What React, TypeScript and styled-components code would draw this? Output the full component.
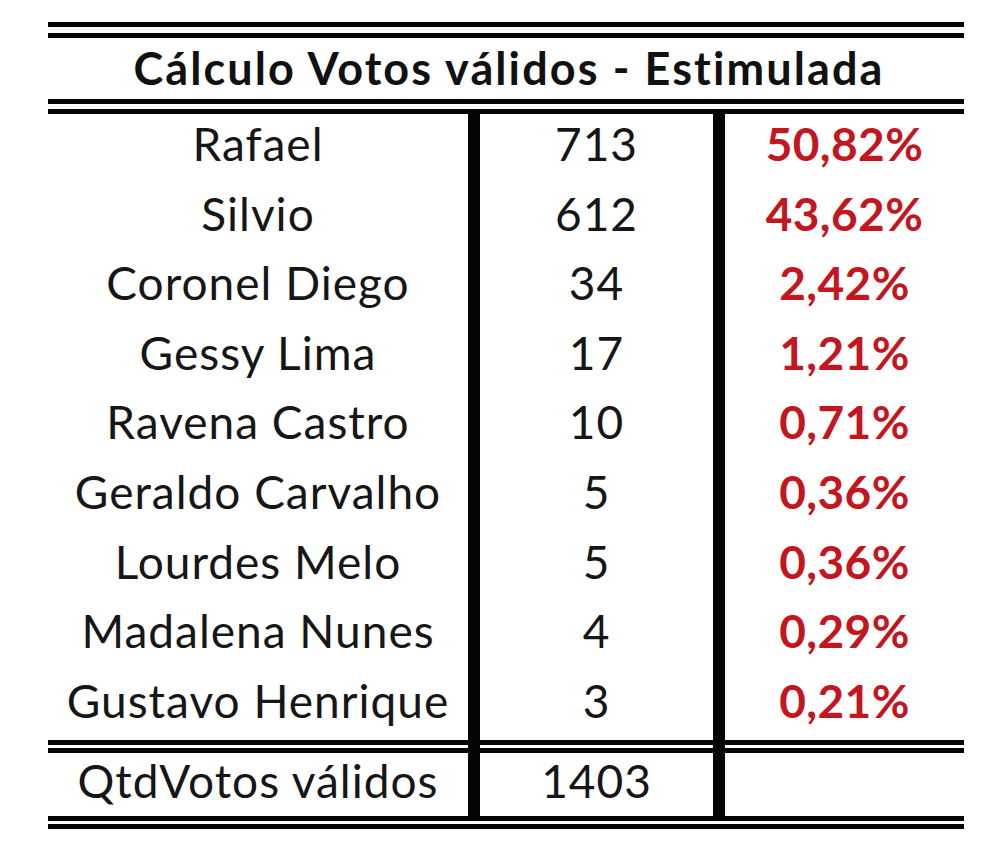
import styled, { createGlobalStyle } from 'styled-components';

type Row = {
  name: string;
  votes: number;
  pct: string;
};

const rows: Row[] = [
  { name: 'Rafael', votes: 713, pct: '50,82%' },
  { name: 'Silvio', votes: 612, pct: '43,62%' },
  { name: 'Coronel Diego', votes: 34, pct: '2,42%' },
  { name: 'Gessy Lima', votes: 17, pct: '1,21%' },
  { name: 'Ravena Castro', votes: 10, pct: '0,71%' },
  { name: 'Geraldo Carvalho', votes: 5, pct: '0,36%' },
  { name: 'Lourdes Melo', votes: 5, pct: '0,36%' },
  { name: 'Madalena Nunes', votes: 4, pct: '0,29%' },
  { name: 'Gustavo Henrique', votes: 3, pct: '0,21%' },
];

const GlobalStyle = createGlobalStyle`
  html, body {
    margin: 0;
    padding: 0;
    background: #ffffff;
  }
  body {
    font-family: Lato, "Open Sans", "Liberation Sans", sans-serif;
    color: #161616;
  }
`;

const Page = styled.div`
  width: 1000px;
  height: 862px;
  padding: 22px 0 0 48px;
  box-sizing: border-box;
  background: #fff;
`;

const Sheet = styled.div`
  width: 916px;
  display: flex;
  flex-direction: column;
`;

const Line = styled.div`
  height: 5px;
  background: #050505;
`;

const Columns = styled.div<{ $height: number }>`
  display: grid;
  grid-template-columns: 420px 245px 251px;
  height: ${(p) => p.$height}px;
`;

const Cell = styled.div<{ $divider?: boolean; $red?: boolean; $pad?: number }>`
  display: flex;
  align-items: center;
  justify-content: center;
  box-sizing: border-box;
  border-left: ${(p) => (p.$divider ? '12px solid #050505' : 'none')};
  padding-bottom: ${(p) => p.$pad ?? 10}px;
  font-size: 46px;
  letter-spacing: ${(p) => (p.$red ? 0.4 : 1)}px;
  white-space: nowrap;
  color: ${(p) => (p.$red ? '#c3161f' : '#161616')};
  font-weight: ${(p) => (p.$red ? 700 : 400)};
`;

const Title = styled.div`
  height: 61px;
  display: flex;
  align-items: center;
  justify-content: center;
  padding: 0 0 2px 6px;
  box-sizing: border-box;
  font-size: 45px;
  font-weight: 700;
  letter-spacing: 2.1px;
  color: #111;
`;

const Body = styled.div`
  display: grid;
  grid-template-rows: repeat(9, 1fr);
  height: 626px;
`;

type DoubleRuleProps = {
  gap: number;
  ticks?: boolean;
};

const DoubleRule = ({ gap, ticks }: DoubleRuleProps) => (
  <>
    <Line />
    <Columns $height={gap}>
      <Cell $pad={0} />
      <Cell $pad={0} $divider={ticks} />
      <Cell $pad={0} $divider={ticks} />
    </Columns>
    <Line />
  </>
);

export default function App() {
  return (
    <Page>
      <GlobalStyle />
      <Sheet>
        <DoubleRule gap={6} />
        <Title>Cálculo Votos válidos - Estimulada</Title>
        <DoubleRule gap={5} />
        <Body>
          {rows.map((r) => (
            <Columns key={r.name} $height={69.5}>
              <Cell>{r.name}</Cell>
              <Cell $divider>{r.votes}</Cell>
              <Cell $divider $red>
                {r.pct}
              </Cell>
            </Columns>
          ))}
        </Body>
        <DoubleRule gap={3} ticks />
        <Columns $height={63}>
          <Cell>QtdVotos válidos</Cell>
          <Cell $divider>1403</Cell>
          <Cell $divider />
        </Columns>
        <DoubleRule gap={3} />
      </Sheet>
    </Page>
  );
}
